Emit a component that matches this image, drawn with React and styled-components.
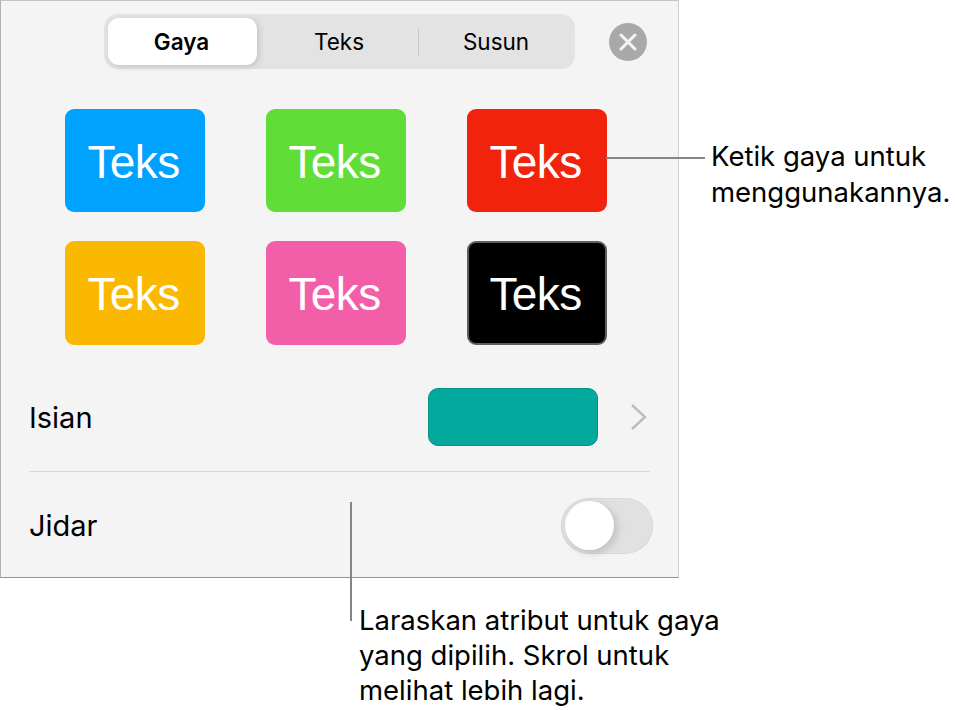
import React from "react";
import styled, { createGlobalStyle } from "styled-components";

const GlobalStyle = createGlobalStyle`
  html, body {
    margin: 0;
    padding: 0;
    background: #ffffff;
    font-family: "Inter", "Liberation Sans", sans-serif;
    color: #000000;
  }
`;

const Page = styled.div`
  position: relative;
  width: 955px;
  height: 710px;
  overflow: hidden;
`;

const Panel = styled.div`
  box-sizing: border-box;
  width: 679px;
  height: 578px;
  background: #f4f4f4;
  border-top: 1px solid #c4c4c4;
  border-left: 1px solid #b0b0b0;
  border-right: 1px solid #cfcfcf;
  border-bottom: 1px solid #949494;
  display: flex;
  flex-direction: column;
`;

const Toolbar = styled.div`
  display: flex;
  align-items: center;
  padding: 13px 0 0 103px;
`;

const Segments = styled.div`
  box-sizing: border-box;
  width: 471px;
  height: 55px;
  padding: 4px;
  border-radius: 14px;
  background: #e3e3e3;
  display: flex;
  align-items: center;
`;

const Segment = styled.div`
  box-sizing: border-box;
  height: 47px;
  width: ${(p) => p.$width}px;
  padding-left: ${(p) => p.$shift || 0}px;
  padding-right: ${(p) => (p.$active ? 2 : 0)}px;
  display: flex;
  align-items: center;
  justify-content: center;
  font-size: 22.5px;
  font-weight: ${(p) => (p.$active ? 600 : 400)};
  border-radius: 11px;
  background: ${(p) => (p.$active ? "#ffffff" : "transparent")};
  box-shadow: ${(p) => (p.$active ? "2px 2px 6px rgba(0, 0, 0, 0.14)" : "none")};
`;

const SegmentDivider = styled.div`
  width: 1px;
  height: 28px;
  background: #c9c9c9;
`;

const CloseButton = styled.div`
  width: 38px;
  height: 38px;
  margin-left: 34px;
  border-radius: 50%;
  background: #a9a9a9;
  display: flex;
  align-items: center;
  justify-content: center;
`;

const StyleGrid = styled.div`
  display: grid;
  grid-template-columns: repeat(3, 140px);
  grid-template-rows: 103px 104px;
  column-gap: 61px;
  row-gap: 29px;
  padding: 40px 0 0 64px;
`;

const Swatch = styled.div`
  box-sizing: border-box;
  border-radius: 9px;
  background: ${(p) => p.$color};
  border: ${(p) => (p.$outlined ? "2px solid #5c5f66" : "none")};
  color: #ffffff;
  display: flex;
  align-items: center;
  justify-content: center;
  padding: 2px 3px 0 0;
  font-family: "Liberation Sans", Arial, sans-serif;
  font-size: 46px;
  letter-spacing: -0.6px;
`;

const Row = styled.div`
  box-sizing: border-box;
  flex: none;
  display: flex;
  align-items: center;
  justify-content: space-between;
  height: ${(p) => p.$height}px;
  padding-top: ${(p) => p.$offset}px;
  margin: 0 28px;
  font-size: 29px;
  border-top: ${(p) => (p.$separated ? "1px solid #d9d9d9" : "none")};
`;

const FillControl = styled.div`
  display: flex;
  align-items: center;
  gap: 32px;
  margin-right: 3px;
`;

const FillSwatch = styled.div`
  box-sizing: border-box;
  width: 170px;
  height: 58px;
  border-radius: 10px;
  background: #02a99c;
  border: 1px solid #078f86;
`;

const Toggle = styled.div`
  box-sizing: border-box;
  width: 92px;
  height: 56px;
  margin-right: -3px;
  padding: 3.5px 4px;
  border-radius: 28px;
  background: #e1e1e1;
  box-shadow: inset 0 0 0 1px #d9d9d9;
`;

const Knob = styled.div`
  width: 49px;
  height: 49px;
  border-radius: 50%;
  background: #ffffff;
  box-shadow: 3px 3px 8px rgba(0, 0, 0, 0.16);
`;

const Leader = styled.div`
  position: absolute;
  left: ${(p) => p.$left}px;
  top: ${(p) => p.$top}px;
  width: ${(p) => p.$width}px;
  height: ${(p) => p.$height}px;
  background: #858585;
`;

const Callout = styled.div`
  position: absolute;
  left: ${(p) => p.$left}px;
  top: ${(p) => p.$top}px;
  font-size: 27.5px;
  line-height: ${(p) => p.$lineHeight}px;
  white-space: nowrap;
`;

const swatches = [
  { color: "#00a2ff" },
  { color: "#61dd38" },
  { color: "#f1230d" },
  { color: "#fab900" },
  { color: "#f25fa8" },
  { color: "#000000", outlined: true },
];

export default function App() {
  return (
    <Page>
      <GlobalStyle />
      <Panel>
        <Toolbar>
          <Segments>
            <Segment $active $width={149}>Gaya</Segment>
            <Segment $width={161} $shift={3}>Teks</Segment>
            <SegmentDivider />
            <Segment $width={152} $shift={2}>Susun</Segment>
          </Segments>
          <CloseButton>
            <svg width="18" height="18" viewBox="0 0 18 18">
              <path d="M2 2L16 16M16 2L2 16" stroke="#f4f4f4" strokeWidth="3" strokeLinecap="round" />
            </svg>
          </CloseButton>
        </Toolbar>
        <StyleGrid>
          {swatches.map((s) => (
            <Swatch key={s.color} $color={s.color} $outlined={s.outlined}>Teks</Swatch>
          ))}
        </StyleGrid>
        <Row $height={126} $offset={18}>
          Isian
          <FillControl>
            <FillSwatch />
            <svg width="17" height="28" viewBox="0 0 17 28">
              <path d="M2 2L15 14L2 26" fill="none" stroke="#bdbdbd" strokeWidth="2.4" />
            </svg>
          </FillControl>
        </Row>
        <Row $height={105} $offset={3} $separated>
          Jidar
          <Toggle>
            <Knob />
          </Toggle>
        </Row>
      </Panel>
      <Leader $left={606} $top={157} $width={99} $height={2} />
      <Callout $left={711} $top={138} $lineHeight={36}>
        Ketik gaya untuk
        <br />
        menggunakannya.
      </Callout>
      <Leader $left={350} $top={502} $width={2} $height={119} />
      <Callout $left={359} $top={603} $lineHeight={35}>
        Laraskan atribut untuk gaya
        <br />
        yang dipilih. Skrol untuk
        <br />
        melihat lebih lagi.
      </Callout>
    </Page>
  );
}
